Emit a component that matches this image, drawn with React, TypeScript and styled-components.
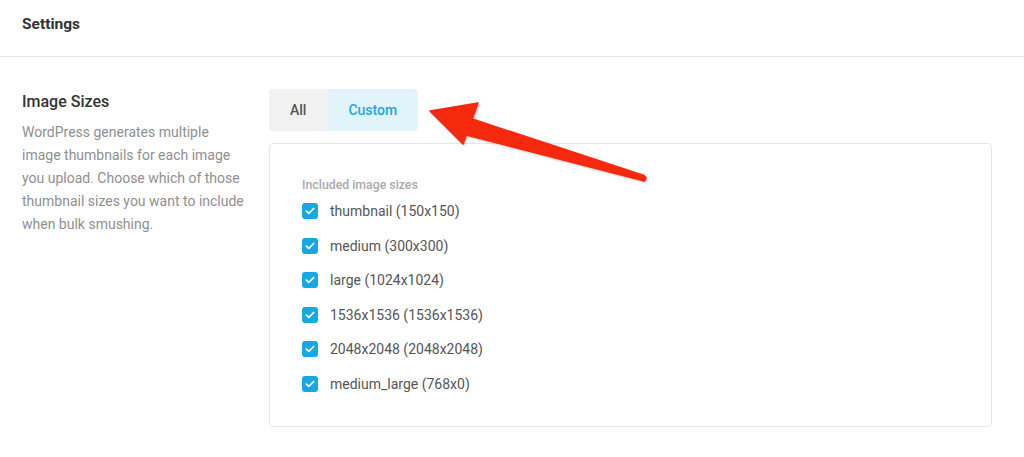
import styled, { createGlobalStyle } from "styled-components";

const sizes = [
  "thumbnail (150x150)",
  "medium (300x300)",
  "large (1024x1024)",
  "1536x1536 (1536x1536)",
  "2048x2048 (2048x2048)",
  "medium_large (768x0)",
];

const GlobalStyle = createGlobalStyle`
  body {
    margin: 0;
    background: #ffffff;
    font-family: Roboto, "Liberation Sans", Arial, sans-serif;
  }
`;

const CheckIcon = () => (
  <svg width="10" height="8" viewBox="0 0 10 8" fill="none">
    <path
      d="M1.3 4.1L3.8 6.4L8.7 1.5"
      stroke="#fff"
      strokeWidth="1.7"
      strokeLinecap="round"
      strokeLinejoin="round"
    />
  </svg>
);

const Arrow = () => (
  <ArrowWrap>
    <svg width="240" height="100" viewBox="0 0 240 100">
      <path
        d="M10 16 L58 8 L52.2 24 L224 80.5 Q227.5 83 224.5 86 L46.3 40 L43 49 Z"
        fill="#f5290e"
        strokeLinejoin="round"
        stroke="#f5290e"
        strokeWidth="1.5"
      />
    </svg>
  </ArrowWrap>
);

export default function App() {
  return (
    <Page>
      <GlobalStyle />
      <Header>
        <Title>Settings</Title>
      </Header>
      <Main>
        <Info>
          <Heading>Image Sizes</Heading>
          <Description>
            WordPress generates multiple image thumbnails for each image you
            upload. Choose which of those thumbnail sizes you want to include
            when bulk smushing.
          </Description>
        </Info>
        <Controls>
          <Tabs>
            <Tab>All</Tab>
            <Tab $active>Custom</Tab>
          </Tabs>
          <Box>
            <BoxLabel>Included image sizes</BoxLabel>
            {sizes.map((s) => (
              <Row key={s}>
                <Check>
                  <CheckIcon />
                </Check>
                <RowLabel>{s}</RowLabel>
              </Row>
            ))}
          </Box>
        </Controls>
      </Main>
      <Arrow />
    </Page>
  );
}

const Page = styled.div`
  position: relative;
  width: 1024px;
  height: 457px;
  overflow: hidden;
`;

const Header = styled.header`
  height: 57px;
  box-sizing: border-box;
  display: flex;
  align-items: center;
  padding: 0 0 8px 22px;
  border-bottom: 1px solid #e6e6e6;
`;

const Title = styled.h1`
  margin: 0;
  font-size: 15.5px;
  font-weight: 700;
  color: #333333;
`;

const Main = styled.main`
  display: flex;
  padding: 32px 32px 0 22px;
`;

const Info = styled.div`
  width: 225px;
  flex-shrink: 0;
  margin-right: 22px;
  padding-top: 3px;
`;

const Heading = styled.h2`
  margin: 0 0 9px;
  font-size: 16px;
  font-weight: 500;
  line-height: 20px;
  color: #333333;
`;

const Description = styled.p`
  margin: 0;
  font-size: 14px;
  line-height: 23px;
  color: #8f8f8f;
`;

const Controls = styled.div`
  flex: 1;
  display: flex;
  flex-direction: column;
  align-items: flex-start;
  gap: 12px;
`;

const Tabs = styled.div`
  display: flex;
  border-radius: 4px;
  overflow: hidden;
  height: 42px;
`;

const Tab = styled.div<{ $active?: boolean }>`
  display: flex;
  align-items: center;
  justify-content: center;
  padding: 0 21px;
  font-size: 14px;
  font-weight: 500;
  background: ${(p) => (p.$active ? "#e1f4fc" : "#f2f2f2")};
  color: ${(p) => (p.$active ? "#17a8e3" : "#555555")};
`;

const Box = styled.div`
  align-self: stretch;
  box-sizing: border-box;
  height: 284px;
  border: 1px solid #e6e6e6;
  border-radius: 4px;
  padding: 33px 32px 0;
`;

const BoxLabel = styled.div`
  font-size: 12.3px;
  font-weight: 500;
  line-height: 17px;
  color: #aaaaaa;
`;

const Row = styled.div`
  display: flex;
  align-items: center;
  height: 34.5px;
`;

const Check = styled.span`
  width: 16px;
  height: 16px;
  border-radius: 3px;
  background: #17a8e3;
  display: flex;
  align-items: center;
  justify-content: center;
  margin-right: 12px;
`;

const RowLabel = styled.span`
  font-size: 14px;
  font-weight: 400;
  color: #555555;
`;

const ArrowWrap = styled.div`
  position: absolute;
  left: 420px;
  top: 95px;
  filter: drop-shadow(1px 1px 1px rgba(0, 0, 0, 0.25));
`;
